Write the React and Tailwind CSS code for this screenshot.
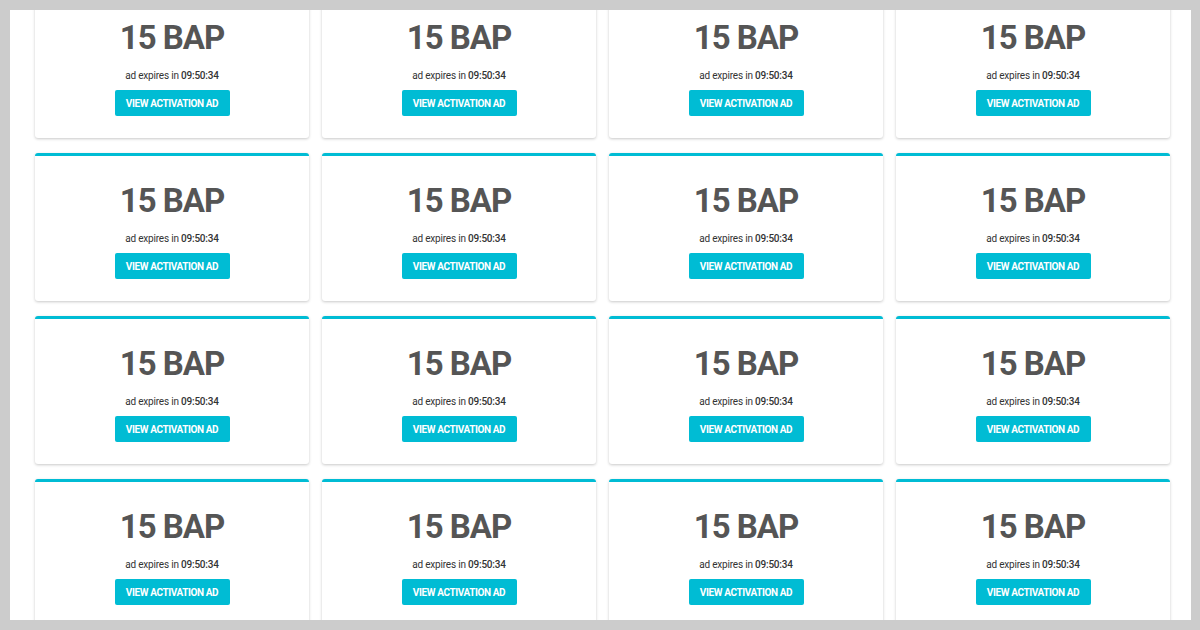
const cards = Array.from({ length: 16 }, (_, i) => ({
  id: i,
  amount: "15 BAP",
  expires: "09:50:34",
}));

const AdCard = ({ amount, expires }) => {
  return (
    <div className="h-[148px] rounded-[3px] border-t-[3px] border-[#00bcd4] bg-white shadow-[0_1px_3px_rgba(0,0,0,0.22)] flex flex-col items-center pt-[25px]">
      <div className="text-[33px] leading-[40px] font-bold tracking-[-1px] text-[#555555]">
        {amount}
      </div>
      <div className="mt-[10px] text-[10px] leading-[16px] tracking-[-0.2px] text-[#333333]">
        ad expires in <span className="font-medium">{expires}</span>
      </div>
      <button
        type="button"
        className="mt-[6px] h-[26px] w-[115px] rounded-[2px] bg-[#00bcd4] text-[10px] font-bold tracking-[-0.4px] uppercase text-white"
      >
        View Activation Ad
      </button>
    </div>
  );
};

export default function App() {
  return (
    <div
      className="w-[1200px] h-[630px] bg-[#cccccc] pt-[10px] pl-[10px] pr-[9px] pb-[10px]"
      style={{ fontFamily: "Roboto, 'Liberation Sans', sans-serif" }}
    >
      <div className="h-full bg-white overflow-hidden pl-[25px] pr-[21px]">
        <div className="-mt-[20px] grid grid-cols-4 gap-x-[13px] gap-y-[15px]">
          {cards.map((c) => (
            <AdCard key={c.id} amount={c.amount} expires={c.expires} />
          ))}
        </div>
      </div>
    </div>
  );
}
